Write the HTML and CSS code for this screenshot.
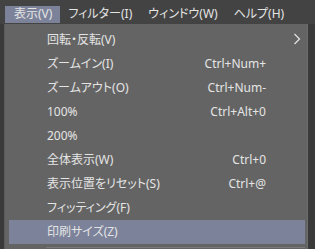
FILE: index.html
```html
<!DOCTYPE html>
<html lang="ja">
<head>
    <meta charset="UTF-8">
    <title>表示メニュー</title>
    <link rel="stylesheet" href="styles.css">
</head>
<body>
    <div class="menubar">
        <div class="menubar-item active">表示(V)</div>
        <div class="menubar-item">フィルター(I)</div>
        <div class="menubar-item">ウィンドウ(W)</div>
        <div class="menubar-item">ヘルプ(H)</div>
    </div>
    <div class="dropdown">
        <div class="menu-item">
            <span class="label">回転・反転(V)</span>
            <span class="arrow">
                <svg width="8" height="12" viewBox="0 0 8 12"><path d="M1.5 1 L6.5 6 L1.5 11" fill="none" stroke="#e0e0e0" stroke-width="1.3"/></svg>
            </span>
        </div>
        <div class="menu-item">
            <span class="label">ズームイン(I)</span>
            <span class="shortcut">Ctrl+Num+</span>
        </div>
        <div class="menu-item">
            <span class="label">ズームアウト(O)</span>
            <span class="shortcut">Ctrl+Num-</span>
        </div>
        <div class="menu-item">
            <span class="label">100%</span>
            <span class="shortcut">Ctrl+Alt+0</span>
        </div>
        <div class="menu-item">
            <span class="label">200%</span>
        </div>
        <div class="menu-item">
            <span class="label">全体表示(W)</span>
            <span class="shortcut">Ctrl+0</span>
        </div>
        <div class="menu-item">
            <span class="label">表示位置をリセット(S)</span>
            <span class="shortcut">Ctrl+@</span>
        </div>
        <div class="menu-item">
            <span class="label">フィッティング(F)</span>
        </div>
        <div class="menu-item selected">
            <span class="label">印刷サイズ(Z)</span>
        </div>
        <div class="separator"></div>
    </div>
</body>
</html>
```

FILE: styles.css
```css
:root {
    --bar-bg: #434343;
    --menu-bg: #646464;
    --hover-bg: #7b829a;
    --text: #e4e4e4;
}

body {
    margin: 0;
    width: 315px;
    height: 249px;
    overflow: hidden;
    background: #3a3a3a;
    font-family: "Noto Sans", "Noto Sans CJK JP", sans-serif;
    font-size: 12px;
    font-feature-settings: "palt";
    color: var(--text);
}

.menubar {
    display: flex;
    height: 24px;
    padding: 6px 0 0 5px;
    box-sizing: border-box;
    background: var(--bar-bg);
}

.menubar-item {
    height: 17px;
    line-height: 16px;
    padding: 0 8px;
    white-space: nowrap;
}

.menubar-item.active {
    padding: 0 8px 0 9px;
    background: var(--hover-bg);
}

.dropdown {
    margin-left: 4px;
    width: 304px;
    padding: 4px 2px 0 4px;
    box-sizing: border-box;
    background: var(--menu-bg);
    border-left: 1px solid #5a5a5a;
    border-right: 1px solid #6d6d6d;
    height: 225px;
}

.menu-item {
    display: flex;
    align-items: center;
    height: 24px;
    padding: 0 4px 2px 38px;
    box-sizing: border-box;
    white-space: nowrap;
}

.menu-item .label {
    flex: 1;
}

.shortcut {
    width: 90px;
    text-align: right;
    margin-right: 35px;
}

.arrow {
    display: flex;
}

.menu-item.selected {
    background: var(--hover-bg);
}

.separator {
    height: 1px;
    margin: 3px 0 0 37px;
    background: #7a7a7a;
}
```
